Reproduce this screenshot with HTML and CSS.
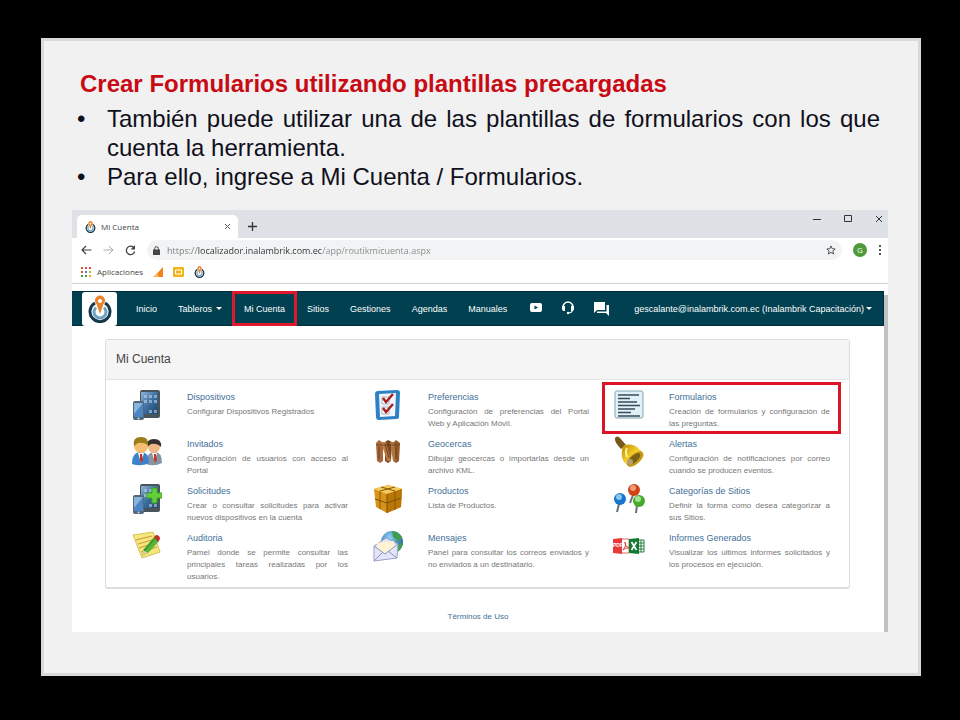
FILE: index.html
```html
<!DOCTYPE html>
<html lang="es">
<head>
    <meta charset="UTF-8">
    <meta name="viewport" content="width=device-width, initial-scale=1.0">
    <title>Crear Formularios</title>
    <link rel="stylesheet" href="styles.css">
</head>
<body>
    <svg class="defs" width="0" height="0" aria-hidden="true">
        <defs>
            <linearGradient id="screen" x1="0" y1="0" x2="1" y2="1">
                <stop offset="0" stop-color="#8fb4d6"/><stop offset="0.5" stop-color="#3d6f9f"/><stop offset="1" stop-color="#1f4469"/>
            </linearGradient>
            <linearGradient id="gold" x1="0" y1="0" x2="1" y2="1">
                <stop offset="0" stop-color="#b98505"/><stop offset="0.5" stop-color="#f6d22c"/><stop offset="1" stop-color="#c58f06"/>
            </linearGradient>
            <radialGradient id="globe" cx="0.4" cy="0.3" r="0.7">
                <stop offset="0" stop-color="#8fd0f2"/><stop offset="1" stop-color="#1b62a5"/>
            </radialGradient>
            <symbol id="logo" viewBox="0 0 24 28">
                <path d="M7 8a10 10 0 1 0 10 0" fill="none" stroke="#17384a" stroke-width="3"/>
                <path d="M8 12.500a6 6 0 1 0 8 0" fill="none" stroke="#6fa3c4" stroke-width="3"/>
                <path d="M12 19 8.500 9a5 5 0 1 1 7 0z" fill="#e8842c"/>
                <circle cx="12" cy="6" r="2" fill="#fff"/>
            </symbol>
            <symbol id="tablet" viewBox="0 0 30 32">
                <rect x="8" y="1" width="20" height="28" rx="2" fill="#4a545d"/>
                <path d="M9 3h17v22H9z" fill="url(#screen)"/>
                <path d="M12 6h3v3h-3zm5 0h3v3h-3zm5 0h3v3h-3zM12 11h3v3h-3zm5 0h3v3h-3zm5 0h3v3h-3zM17 21h3v3h-3zm5 0h3v3h-3z" fill="#b7d2ea" opacity="0.6"/>
                <rect x="1" y="12" width="11" height="19" rx="2" fill="#52677b"/>
                <path d="M2 14h9v14H2z" fill="#4b86c2"/>
                <path d="M2 14h9L2 25z" fill="#87b5df"/>
                <circle cx="6.500" cy="29.500" r="1" fill="#d0dce6"/>
            </symbol>
        </defs>
    </svg>

    <main class="slide">
        <h1>Crear Formularios utilizando plantillas precargadas</h1>
        <ul class="steps">
            <li>También puede utilizar una de las plantillas de formularios con los que cuenta la herramienta.</li>
            <li>Para ello, ingrese a Mi Cuenta / Formularios.</li>
        </ul>

        <div class="browser">
            <div class="tab-strip">
                <div class="tab">
                    <svg class="favicon"><use href="#logo"/></svg>
                    <span class="tab-title">Mi Cuenta</span>
                    <button class="icon-btn" aria-label="Cerrar pestaña">
                        <svg width="7" height="7" viewBox="0 0 7 7"><path d="M1 1l5 5M6 1L1 6" stroke="#555" fill="none"/></svg>
                    </button>
                </div>
                <button class="icon-btn new-tab" aria-label="Nueva pestaña">
                    <svg width="9" height="9" viewBox="0 0 9 9"><path d="M4.500 0v9M0 4.500h9" stroke="#333" stroke-width="1.300"/></svg>
                </button>
                <div class="window-controls">
                    <button class="icon-btn" aria-label="Minimizar"><svg width="8" height="8" viewBox="0 0 8 8"><path d="M0 4.500h8" stroke="#333"/></svg></button>
                    <button class="icon-btn" aria-label="Maximizar"><svg width="8" height="8" viewBox="0 0 8 8"><path d="M.5.5h7v6h-7z" fill="none" stroke="#333"/></svg></button>
                    <button class="icon-btn" aria-label="Cerrar"><svg width="8" height="8" viewBox="0 0 8 8"><path d="M1 1l6 6M7 1L1 7" stroke="#333"/></svg></button>
                </div>
            </div>

            <div class="toolbar">
                <button class="icon-btn" aria-label="Atrás"><svg width="11" height="10" viewBox="0 0 11 10"><path d="M10.500 5H1.500M5 1L1 5l4 4" stroke="#444" stroke-width="1.200" fill="none"/></svg></button>
                <button class="icon-btn" aria-label="Adelante"><svg width="11" height="10" viewBox="0 0 11 10"><path d="M.5 5h9M6 1l4 4-4 4" stroke="#aaa" fill="none"/></svg></button>
                <button class="icon-btn" aria-label="Recargar"><svg width="11" height="11" viewBox="0 0 11 11"><path d="M9 3a4.200 4.200 0 1 0 .6 3.500" stroke="#444" stroke-width="1.300" fill="none"/><path d="M10 0v4.500H5.500z" fill="#444"/></svg></button>
                <div class="address">
                    <svg width="7" height="9" viewBox="0 0 7 9"><path d="M0 3.500h7V9H0z" fill="#444"/><path d="M1.700 4V2.500a1.800 1.800 0 0 1 3.600 0V4" fill="none" stroke="#444"/></svg>
                    <input class="url" type="text" aria-label="Dirección" value="https://localizador.inalambrik.com.ec/app/routikmicuenta.aspx">
                    <button class="icon-btn" aria-label="Favorito"><svg width="10" height="10" viewBox="0 0 10 10"><path d="M5 .9l1.200 2.800 3 .3-2.300 2 .7 3L5 7.400 2.400 9l.7-3L.8 4l3-.3z" fill="none" stroke="#444" stroke-width="0.900"/></svg></button>
                </div>
                <button class="avatar" aria-label="Perfil">G</button>
                <button class="icon-btn" aria-label="Menú"><svg width="4" height="10" viewBox="0 0 4 10"><path d="M1 0h2v2H1zM1 4h2v2H1zM1 8h2v2H1z" fill="#555"/></svg></button>
            </div>

            <div class="bookmarks">
                <a class="bookmark" href="#">
                    <svg width="10" height="10" viewBox="0 0 10 10"><path d="M0 0h2v2H0zM4 0h2v2H4zM8 0h2v2H8zM0 4h2v2H0z" fill="#d9483b"/><path d="M4 4h2v2H4z" fill="#4285d4"/><path d="M8 4h2v2H8zM8 8h2v2H8z" fill="#e9a528"/><path d="M0 8h2v2H0zM4 8h2v2H4z" fill="#3c9a4e"/></svg>
                    Aplicaciones
                </a>
                <a class="bookmark" href="#" aria-label="Analíticas"><svg width="10" height="10" viewBox="0 0 10 10"><path d="M10 0v10H5L3.500 7z" fill="#ef8218"/><path d="M0 10l4-4 2 4z" fill="#f9b65b"/></svg></a>
                <a class="bookmark" href="#" aria-label="Presentaciones"><svg width="11" height="10" viewBox="0 0 11 10"><rect width="11" height="10" rx="1" fill="#f0b51c"/><path d="M2.500 3h6v4h-6z" fill="none" stroke="#fff"/></svg></a>
                <a class="bookmark" href="#" aria-label="Localizador"><svg class="favicon"><use href="#logo"/></svg></a>
            </div>

            <div class="viewport">
                <div class="page">
                    <nav class="navbar">
                        <a class="brand" href="#" aria-label="Inicio"><svg width="24" height="28"><use href="#logo"/></svg></a>
                        <a class="nav-link" href="#">Inicio</a>
                        <a class="nav-link" href="#">Tableros <span class="caret"></span></a>
                        <a class="nav-link marked" href="#">Mi Cuenta</a>
                        <a class="nav-link" href="#">Sitios</a>
                        <a class="nav-link" href="#">Gestiones</a>
                        <a class="nav-link" href="#">Agendas</a>
                        <a class="nav-link" href="#">Manuales</a>
                        <a class="nav-icon" href="#" aria-label="Videos"><svg width="12" height="14" viewBox="0 0 12 14"><rect y="1" width="12" height="9" rx="2" fill="#fff"/><path d="M4.500 3.500v4L8 5.500z" fill="#004050"/></svg></a>
                        <a class="nav-icon" href="#" aria-label="Soporte"><svg width="14" height="16" viewBox="0 0 14 16"><path d="M2 7V6a5 5 0 0 1 10 0v1" fill="none" stroke="#fff" stroke-width="1.500"/><path d="M1 5h3v5H3a2 2 0 0 1-2-2zM10 5h3v3a2 2 0 0 1-2 2h-1z" fill="#fff"/><path d="M11.500 9q-.5 3-4.500 3" fill="none" stroke="#fff" stroke-width="1.200"/><circle cx="7" cy="12" r="1.200" fill="#fff"/></svg></a>
                        <a class="nav-icon" href="#" aria-label="Chat"><svg width="15" height="14" viewBox="0 0 15 14"><path d="M0 0h11v8H3l-3 3z" fill="#fff"/><path d="M12.500 3H15v11l-3-3H3V9.500h9.500z" fill="#fff"/></svg></a>
                        <button class="account">gescalante@inalambrik.com.ec (Inalambrik Capacitación)<span class="caret"></span></button>
                    </nav>

                    <section class="panel">
                        <h2 class="panel-heading">Mi Cuenta</h2>
                        <div class="panel-body">
                            <div class="option">
                                <svg width="30" height="32"><use href="#tablet"/></svg>
                                <div class="option-text"><a href="#">Dispositivos</a><p>Configurar Dispositivos Registrados</p></div>
                            </div>
                            <div class="option">
                                <svg width="28" height="32" viewBox="0 0 28 32">
                                    <path d="M4 2l19-1q3 0 3 3l-1 24q0 2-2 2L5 31q-3 0-3-3L1 5q0-3 3-3z" fill="#2d82c6"/>
                                    <path d="M5 5l17-1-1 23-15 1z" fill="#f2f5fa"/>
                                    <path d="M8 8h7v7H8zM8 18h7v7H8z" fill="#fff" stroke="#a8b2c0"/>
                                    <path d="M9 9l3 4 7-8M9 19l3 4 7-8" fill="none" stroke="#a81f22" stroke-width="2.500"/>
                                </svg>
                                <div class="option-text"><a href="#">Preferencias</a><p>Configuración de preferencias del Portal Web y Aplicación Móvil.</p></div>
                            </div>
                            <div class="option highlighted">
                                <svg width="30" height="32" viewBox="0 0 30 32">
                                    <rect x="1" y="2" width="28" height="27" rx="2" fill="#e2f0f8" stroke="#87a3b5"/>
                                    <path d="M4 6h21M4 9.500h12M4 13h19M4 16.500h22M4 20h17M4 23.500h13M4 27h22" stroke="#38495a" stroke-width="1.500"/>
                                </svg>
                                <div class="option-text"><a href="#">Formularios</a><p>Creación de formularios y configuración de las preguntas.</p></div>
                            </div>

                            <div class="option">
                                <svg width="32" height="32" viewBox="0 0 32 32">
                                    <path d="M15 28q0-12 9-12 7 0 7 11-8 4-16 1z" fill="#8796a5"/>
                                    <path d="M21 17h5l-2 9z" fill="#fff"/><path d="M23 18h2l1 6-2 3-1-3z" fill="#cf3326"/>
                                    <circle cx="23" cy="11" r="6" fill="#efb788"/>
                                    <path d="M16 11q-1-8 7-8 8 0 7 8-4-4-10-3z" fill="#34302f"/>
                                    <path d="M1 28q0-12 9-12 8 0 8 11-8 4-17 1z" fill="#3d83cc"/>
                                    <path d="M7 17h6l-3 10z" fill="#fff"/><path d="M9 18h2l1 6-2 3-1-3z" fill="#c62e22"/>
                                    <circle cx="10" cy="10" r="7" fill="#f3bd72"/>
                                    <path d="M3 10q-2-9 7-9 8 0 7 8-5-3-10-2z" fill="#9a7c18"/>
                                </svg>
                                <div class="option-text"><a href="#">Invitados</a><p>Configuración de usuarios con acceso al Portal</p></div>
                            </div>
                            <div class="option">
                                <svg width="26" height="32" viewBox="0 0 26 32">
                                    <path d="M1 7l3-3 4 3v18l-3 2-3-2z" fill="#a8693a"/>
                                    <path d="M18 7l3-3 4 3-1 18-3 2-3-2z" fill="#94592b"/>
                                    <path d="M10 6l3-2 4 2-1 19-3 2-3-2z" fill="#7b4720"/>
                                    <path d="M6 6h5l5 19h-4z" fill="#b97b43"/>
                                    <path d="M15 6h4l2 19h-3z" fill="#b0733d"/>
                                    <path d="M4 11v12M21 11v12M10 8l4 14" stroke="#6a3d17" fill="none"/>
                                    <path d="M1 9h24" stroke="#563011" opacity="0.600"/>
                                </svg>
                                <div class="option-text"><a href="#">Geocercas</a><p>Dibujar geocercas o importarlas desde un archivo KML.</p></div>
                            </div>
                            <div class="option">
                                <svg width="30" height="32" viewBox="0 0 30 32">
                                    <path d="M1 2q2-3 5 0l6 7-5 4q-7-7-6-11z" fill="#79561d"/>
                                    <path d="M10 9q9-2 14 3l5 5q2 3-4 9-7 6-10 4-6-3-7-9-1-8 2-12z" fill="url(#gold)"/>
                                    <ellipse cx="21" cy="23" rx="10" ry="5" transform="rotate(-42 21 23)" fill="#c79a14"/>
                                    <ellipse cx="20" cy="23" rx="8" ry="3.500" transform="rotate(-42 20 23)" fill="#7c6217"/>
                                    <circle cx="16" cy="26" r="3" fill="#b0a16e"/>
                                    <path d="M13 12q-2 4 0 9" stroke="#fff394" stroke-width="2" fill="none"/>
                                </svg>
                                <div class="option-text"><a href="#">Alertas</a><p>Configuración de notificaciones por correo cuando se producen eventos.</p></div>
                            </div>

                            <div class="option">
                                <svg width="30" height="32" viewBox="0 0 30 32">
                                    <use href="#tablet" width="30" height="32"/>
                                    <path d="M20 5h5v5h5v5h-5v5h-5v-5h-5v-5h5z" fill="#62cf3b" stroke="#3ca51f"/>
                                </svg>
                                <div class="option-text"><a href="#">Solicitudes</a><p>Crear o consultar solicitudes para activar nuevos dispositivos en la cuenta</p></div>
                            </div>
                            <div class="option">
                                <svg width="30" height="32" viewBox="0 0 30 32">
                                    <path d="M1 6l14-4 14 4-1 18-14 6L3 24z" fill="#d79418"/>
                                    <path d="M1 6l14-4 14 4-15 5z" fill="#f2c960"/>
                                    <path d="M14 11l15-5-1 18-14 6z" fill="#b97708"/>
                                    <path d="M8 4l14 4v19M22 4L7 8v18" stroke="#8b5907" fill="none"/>
                                    <path d="M2 16l12 4 14-5M14 11v19" stroke="#805107" fill="none"/>
                                </svg>
                                <div class="option-text"><a href="#">Productos</a><p>Lista de Productos.</p></div>
                            </div>
                            <div class="option">
                                <svg width="32" height="32" viewBox="0 0 32 32">
                                    <path d="M20 12l-3 8M6 21l-2 8M24 22l-1 8" stroke="#66707a" stroke-width="2"/>
                                    <circle cx="21" cy="7" r="6" fill="#cf4316"/><circle cx="20" cy="5" r="3" fill="#f29a72"/>
                                    <circle cx="7" cy="16" r="6" fill="#1976cc"/><circle cx="6" cy="14" r="3" fill="#8ac4f2"/>
                                    <circle cx="26" cy="18" r="6" fill="#45a92d"/><circle cx="25" cy="16" r="3" fill="#a7e18c"/>
                                </svg>
                                <div class="option-text"><a href="#">Categorías de Sitios</a><p>Definir la forma como desea categorizar a sus Sitios.</p></div>
                            </div>

                            <div class="option">
                                <svg width="30" height="32" viewBox="0 0 30 32">
                                    <path d="M1 5l20-3 7 20-18 6z" fill="#f5e779" stroke="#d5c15d"/>
                                    <path d="M4 10l16-4M6 14l14-4M7 18l9-3M9 22l16-5" stroke="#cf9b45" stroke-width="1.200"/>
                                    <path d="M11 20L22 7l5 4-11 12-6 3z" fill="#55b43a"/>
                                    <path d="M22 7l2-2q4 0 4 4l-2 3z" fill="#c22f2b"/>
                                    <path d="M11 20l5 3-6 3z" fill="#e9c995"/><path d="M12 21L23 8" stroke="#2c7b21"/>
                                </svg>
                                <div class="option-text"><a href="#">Auditoria</a><p>Pamel donde se permite consultar las principales tareas realizadas por los usuarios.</p></div>
                            </div>
                            <div class="option">
                                <svg width="32" height="32" viewBox="0 0 32 32">
                                    <circle cx="20" cy="12" r="11" fill="url(#globe)"/>
                                    <path d="M20 1q6 0 10 6-2 5-4 4l-5-4zM25 14l6-1q-1 7-7 10z" fill="#3f9f4c"/>
                                    <path d="M2 16l12-8 12 6-1 14-23 3z" fill="#e4e5f8" stroke="#9aa0cb"/>
                                    <path d="M5 13l17-2v7l-9 6-8-6z" fill="#fff3d3"/>
                                    <path d="M2 16l11 8 13-10M2 31l9-9M25 28l-9-7" fill="none" stroke="#8c92c0"/>
                                </svg>
                                <div class="option-text"><a href="#">Mensajes</a><p>Panel para consultar los correos enviados y no enviados a un destinatario.</p></div>
                            </div>
                            <div class="option">
                                <svg width="32" height="32" viewBox="0 0 32 32">
                                    <path d="M8 9h8v14H8z" fill="#fff" stroke="#dc6868"/>
                                    <path d="M0 9l9-1v16l-9-1z" fill="#e63b3d"/>
                                    <text x="0" y="17" class="pdf-label">PDF</text>
                                    <path d="M10 20q4-4 2-8 0 5 4 6-3-1-6 2" fill="none" stroke="#d44"/>
                                    <path d="M25 10h6v12h-6z" fill="#fff" stroke="#287c3b"/>
                                    <path d="M25 13h6M25 16h6M25 19h6M28 10v12" stroke="#287c3b"/>
                                    <path d="M16 9l10-1v16l-10-1z" fill="#137a32"/>
                                    <path d="M18.500 12l5 8M23.500 12l-5 8" stroke="#fff" stroke-width="1.700"/>
                                </svg>
                                <div class="option-text"><a href="#">Informes Generados</a><p>Visualizar los ultimos informes solicitados y los procesos en ejecución.</p></div>
                            </div>
                        </div>
                    </section>

                    <footer class="footer"><a href="#">Términos de Uso</a></footer>
                </div>
                <div class="scrollbar"></div>
            </div>
        </div>
    </main>
</body>
</html>
```
FILE: styles.css
```css
* {
    box-sizing: border-box;
}

body {
    margin: 0;
    padding: 38px 39px 44px 41px;
    min-height: 100vh;
    background: #000000;
    font-family: "Liberation Sans", Arial, sans-serif;
    display: flex;
}

a {
    text-decoration: none;
    color: inherit;
}

button {
    border: none;
    background: none;
    padding: 0;
    font-family: inherit;
    color: inherit;
    cursor: pointer;
}

svg {
    display: block;
    flex: none;
}

.defs {
    position: absolute;
}

.slide {
    flex: 1;
    min-width: 0;
    background: #f1f1f1;
    border: 3px solid #d9d9d9;
    padding: 28px 30px 40px 28px;
}

h1 {
    margin: 0 0 6px 8px;
    font-size: 24px;
    line-height: 29px;
    color: #c80a14;
}

.steps {
    margin: 0 8px 19px 5px;
    padding: 0;
    list-style: none;
    font-size: 24px;
    line-height: 29px;
    color: #10101c;
    text-align: justify;
}

.steps li {
    display: grid;
    grid-template-columns: 30px 1fr;
}

.steps li::before {
    content: "•";
}

/* Ventana del navegador */
.browser {
    background: #ffffff;
    font-family: "Open Sans", sans-serif;
    color: #444444;
}

.tab-strip {
    display: flex;
    align-items: flex-end;
    height: 28px;
    padding-left: 5px;
    background: #dee1e6;
}

.tab {
    display: flex;
    align-items: center;
    gap: 5px;
    width: 161px;
    height: 23px;
    padding: 0 7px 0 8px;
    border-radius: 5px 5px 0 0;
    background: #ffffff;
}

.tab-title {
    flex: 1;
    font-size: 8px;
}

.favicon {
    width: 11px;
    height: 12px;
}

.icon-btn {
    display: flex;
    align-items: center;
    justify-content: center;
}

.new-tab {
    height: 23px;
    margin-left: 10px;
}

.window-controls {
    display: flex;
    gap: 23px;
    height: 28px;
    margin-left: auto;
    padding: 0 5px 10px 0;
}

.toolbar {
    display: flex;
    align-items: center;
    gap: 11px;
    height: 24px;
    padding: 0 6px 0 9px;
}

.address {
    flex: 1;
    display: flex;
    align-items: center;
    gap: 7px;
    height: 20px;
    padding: 0 6px;
    border-radius: 10px;
    background: #f1f3f4;
}

.url {
    flex: 1;
    min-width: 0;
    padding: 0;
    border: none;
    outline: none;
    font-family: "Open Sans", sans-serif;
    font-size: 9px;
    color: transparent;
    background: linear-gradient(90deg, #777777 31px, #333333 31px, #333333 154px, #888888 154px);
    background-clip: text;
    -webkit-background-clip: text;
}

.avatar {
    width: 14px;
    height: 14px;
    border-radius: 50%;
    background: #4f9a38;
    color: #ffffff;
    font-size: 8px;
    line-height: 14px;
}

.bookmarks {
    display: flex;
    align-items: center;
    gap: 10px;
    height: 22px;
    padding: 0 9px 2px;
    border-bottom: 1px solid #d0d2d4;
    font-size: 8px;
}

.bookmark {
    display: flex;
    align-items: center;
    gap: 6px;
}

.viewport {
    display: flex;
    padding-top: 7px;
    font-family: "Liberation Sans", Arial, sans-serif;
}

.page {
    flex: 1;
    min-width: 0;
}

.scrollbar {
    width: 4px;
    margin-top: 4px;
    background: #c1c1c1;
}

/* Barra de navegación */
.navbar {
    display: flex;
    align-items: center;
    gap: 1px;
    height: 35px;
    padding: 0 11px 0 10px;
    background: #004050;
    border: 1px solid #002c3a;
    border-left: none;
    color: #ffffff;
    font-size: 9px;
}

.brand {
    display: flex;
    align-items: center;
    justify-content: center;
    width: 35px;
    height: 34px;
    margin-right: 8px;
    border-radius: 3px;
    background: #ffffff;
}

.nav-link {
    display: flex;
    align-items: center;
    height: 35px;
    padding: 0 10px;
    white-space: nowrap;
}

.marked {
    border: 3px solid #e0182d;
    padding: 0 9px;
    margin: 0 -1px;
}

.nav-icon {
    margin-left: 18px;
}

.nav-link + .nav-icon {
    margin-left: 12px;
}

.caret {
    margin-left: 4px;
    border-top: 3px solid #ffffff;
    border-left: 3px solid transparent;
    border-right: 3px solid transparent;
}

.account {
    display: flex;
    align-items: center;
    margin-left: auto;
    font-size: 9px;
    white-space: nowrap;
}

.account .caret {
    margin-left: 2px;
}

/* Panel de opciones */
.panel {
    margin: 13px 34px 0 33px;
    border: 1px solid #dddddd;
    border-bottom-width: 2px;
    border-radius: 3px;
}

.panel-heading {
    margin: 0;
    padding: 0 10px;
    border-bottom: 1px solid #e3e3e3;
    background: #f5f5f5;
    color: #444444;
    font-size: 12px;
    font-weight: normal;
    line-height: 39px;
}

.panel-body {
    display: grid;
    grid-template-columns: repeat(3, 1fr);
    grid-auto-rows: minmax(47px, auto);
    padding: 9px 10px 4px;
}

.option {
    display: grid;
    grid-template-columns: 62px 1fr;
    column-gap: 9px;
    align-items: start;
    padding-right: 9px;
}

.option > svg {
    justify-self: center;
}

.option-text a {
    display: block;
    color: #3f6f98;
    font-size: 9px;
    line-height: 17px;
}

.option-text p {
    margin: 0;
    color: #777777;
    font-size: 8px;
    line-height: 12px;
    text-align: justify;
}

.highlighted {
    position: relative;
}

.highlighted::after {
    content: "";
    position: absolute;
    inset: -7px -2px 2px 4px;
    border: 3px solid #dd1328;
}

.pdf-label {
    font-size: 5px;
    font-weight: bold;
    fill: #ffffff;
}

.footer {
    padding: 22px 0 9px;
    color: #3f6f98;
    font-size: 8px;
    line-height: 12px;
    text-align: center;
}
```
